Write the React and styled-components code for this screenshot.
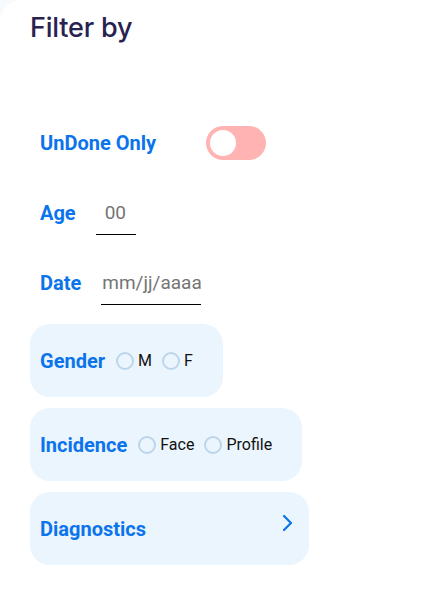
import React from "react";
import styled, { createGlobalStyle } from "styled-components";

const Global = createGlobalStyle`
  html, body { margin: 0; padding: 0; background: #f8fbfe; }
  body { font-family: Roboto, "Liberation Sans", sans-serif; }
  * { box-sizing: border-box; }
`;

const Panel = styled.div`
  width: 425px;
  height: 591px;
  background: #ffffff;
  border-top-left-radius: 22px;
  padding: 8px 0 0 30px;
  display: flex;
  flex-direction: column;
`;

const Title = styled.h1`
  margin: 0;
  font-family: Inter, "Open Sans", sans-serif;
  font-weight: 500;
  font-size: 27px;
  line-height: 40px;
  color: #27224f;
  letter-spacing: -0.2px;
`;

const Form = styled.div`
  display: flex;
  flex-direction: column;
  margin-top: 77px;
`;

const Row = styled.div`
  display: flex;
  align-items: center;
  gap: ${(p) => p.$gap || 20}px;
  height: ${(p) => p.$h || 36}px;
  padding-left: 10px;
  margin-bottom: ${(p) => p.$mb || 0}px;
`;

const Label = styled.span`
  font-family: Roboto, "Liberation Sans", sans-serif;
  font-weight: 700;
  font-size: 20px;
  color: #0b74ec;
  white-space: nowrap;
`;

const Toggle = styled.div`
  width: 60px;
  height: 34px;
  border-radius: 17px;
  background: #ffb3b3;
  padding: 4px;
  display: flex;
  align-items: center;
`;

const Knob = styled.div`
  width: 26px;
  height: 26px;
  border-radius: 50%;
  background: #ffffff;
`;

const Input = styled.input`
  width: ${(p) => p.$w}px;
  height: 40px;
  border: none;
  border-bottom: 1px solid #000;
  background: transparent;
  font-family: Roboto, "Liberation Sans", sans-serif;
  font-size: 19px;
  color: #757575;
  padding: 0 0 4px ${(p) => p.$pl || 1}px;
  margin-top: 4px;
  outline: none;
  &::placeholder { color: #757575; }
`;

const Box = styled.div`
  display: flex;
  align-items: center;
  align-self: flex-start;
  width: ${(p) => (p.$w ? `${p.$w}px` : "auto")};
  justify-content: ${(p) => (p.$between ? "space-between" : "flex-start")};
  height: 73px;
  background: #ebf5fd;
  border-radius: 20px;
  padding: 0 ${(p) => p.$pr || 30}px 0 10px;
  margin-bottom: 11px;
`;

const Options = styled.div`
  display: flex;
  align-items: center;
  gap: 10px;
  margin-left: 11px;
`;

const Option = styled.label`
  display: flex;
  align-items: center;
  gap: 4px;
  font-family: Roboto, "Liberation Sans", sans-serif;
  font-size: 16px;
  color: #111;
`;

const Radio = styled.span`
  width: 18px;
  height: 18px;
  border-radius: 50%;
  border: 2px solid #bcd5ea;
`;

const ChevronIcon = styled.svg`
  margin-top: -12px;
`;

const Chevron = () => (
  <ChevronIcon width="12" height="18" viewBox="0 0 12 18" fill="none">
    <path d="M3 2l7 7-7 7" stroke="#0b74ec" strokeWidth="2.2" strokeLinecap="round" strokeLinejoin="round" />
  </ChevronIcon>
);

export default function App() {
  return (
    <>
      <Global />
      <Panel>
        <Title>Filter by</Title>
        <Form>
          <Row $gap={50} $mb={34}>
            <Label>UnDone Only</Label>
            <Toggle>
              <Knob />
            </Toggle>
          </Row>
          <Row $mb={34}>
            <Label>Age</Label>
            <Input $w={40} $pl={9} placeholder="00" />
          </Row>
          <Row $mb={23}>
            <Label>Date</Label>
            <Input $w={100} $pl={1} placeholder="mm/jj/aaaa" />
          </Row>
          <Box>
            <Label>Gender</Label>
            <Options>
              <Option><Radio />M</Option>
              <Option><Radio />F</Option>
            </Options>
          </Box>
          <Box>
            <Label>Incidence</Label>
            <Options>
              <Option><Radio />Face</Option>
              <Option><Radio />Profile</Option>
            </Options>
          </Box>
          <Box $w={279} $between $pr={16}>
            <Label>Diagnostics</Label>
            <Chevron />
          </Box>
        </Form>
      </Panel>
    </>
  );
}
